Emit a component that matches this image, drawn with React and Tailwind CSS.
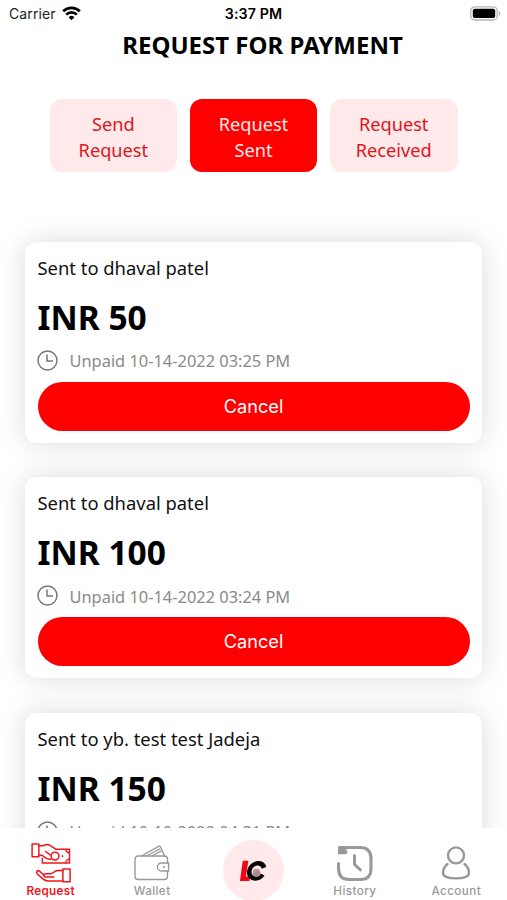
import React, { useState } from 'react'

const tabs = [
  { id: 'send', lines: ['Send', 'Request'] },
  { id: 'sent', lines: ['Request', 'Sent'] },
  { id: 'received', lines: ['Request', 'Received'] },
]

const requests = [
  { id: 1, name: 'dhaval patel', amount: 50, status: 'Unpaid', date: '10-14-2022 03:25 PM' },
  { id: 2, name: 'dhaval patel', amount: 100, status: 'Unpaid', date: '10-14-2022 03:24 PM' },
  { id: 3, name: 'yb. test test Jadeja', amount: 150, status: 'Unpaid', date: '10-10-2022 04:31 PM' },
]

function WifiIcon() {
  return (
    <svg width="19" height="15" viewBox="0 0 19 15" fill="none" stroke="#000" strokeWidth="2.7">
      <path d="M1.2 5.2a11.8 11.8 0 0 1 16.6 0" />
      <path d="M4.2 8.6a7.4 7.4 0 0 1 10.6 0" />
      <path d="M9.5 14.2 6.6 11.2a4.1 4.1 0 0 1 5.8 0z" fill="#000" stroke="none" />
    </svg>
  )
}

function BatteryIcon() {
  return (
    <svg width="31" height="15" viewBox="0 0 31 15" fill="none">
      <rect x="0.8" y="0.8" width="26.4" height="13.2" rx="4" stroke="#b4b4b4" strokeWidth="1.3" />
      <rect x="2.8" y="2.8" width="22.4" height="9.2" rx="2" fill="#000" />
      <path d="M28.700 5v4.800c1-.4 1.600-1.300 1.600-2.400S29.700 5.400 28.700 5z" fill="#b4b4b4" />
    </svg>
  )
}

function ClockIcon() {
  return (
    <svg width="21" height="21" viewBox="0 0 21 21" fill="none" stroke="#777" strokeWidth="1.5">
      <circle cx="10.500" cy="10.500" r="9.500" />
      <path d="M10 4.600v6.400h6" />
    </svg>
  )
}

function RequestIcon() {
  return (
    <svg width="40" height="40" viewBox="0.500 0.500 40 40" fill="none" stroke="#f5141c" strokeWidth="1.5" strokeLinejoin="round" strokeLinecap="round">
      {/* hand holding the note */}
      <path d="M1.600 1.500h6.800v12.800H1.600z" />
      <path d="M8.400 3.200h4.200l2.600-1c1.400-.5 2.700-.3 3.900.5l6.200 4" />
      <path d="M8.400 12.700h2.800l4.300 3c1.500 1 3.200 1.200 5 .8" />
      <path d="M15 9l4.800 3.300" />
      <path d="M25.300 6.700H39v13.800H11.800v-4.600" />
      <circle cx="24.500" cy="13.600" r="3.900" />
      <path d="M35.200 6.900c.2 2 1.500 3.300 3.600 3.500M38.800 16.700c-2 .2-3.400 1.500-3.600 3.600" strokeWidth="1.200" />
      <path d="M32 13.600h.1" strokeWidth="1.800" />
      {/* open hand */}
      <path d="M32.400 26.600h7.200v12.600h-7.200z" />
      <path d="M32.400 28h-5c-3.600 0-4.500 3.200-7.300 3.200h-4.800c-2.700 0-2.700 3.300 0 3.300h8" />
      <path d="M13.500 32.600l-4.300-3.900c-2-1.500-4.200.5-2.600 2.500l5.700 5.200c1.600 1.400 3.200 2 5.300 2h14.800" />
    </svg>
  )
}

function WalletIcon() {
  return (
    <svg width="36" height="36" viewBox="0 0 36 36" fill="none" stroke="#999" strokeWidth="1.400" strokeLinejoin="round" strokeLinecap="round">
      <path d="M33.500 18V14a3 3 0 0 0-3-3H4a3 3 0 0 0-3 3v17.500a3 3 0 0 0 3 3h26.500a3 3 0 0 0 3-3V26" />
      <path d="M34.600 18h-7.200a4 4 0 0 0 0 8h7.200z" />
      <path d="M30 22h.1" strokeWidth="2" />
      <path d="M7.500 11 24.500 1.400c.9-.5 1.600-.2 2 .6L30.500 11" />
      <path d="M12.500 11 25.500 4M18 11l8.800-4.800" />
    </svg>
  )
}

function LogoIcon() {
  return (
    <svg width="28" height="24" viewBox="0 0 28 24" fill="none">
      <path d="M3.800 1.800h5.600L6.900 17.500h4.300l-.8 4.500H.9z" fill="#f00713" />
      <g transform="translate(2.400 0) skewX(-10)">
        <path d="M24.200 8.800A7.400 7.600 0 1 0 24 15.400" stroke="#080808" strokeWidth="4.500" />
      </g>
      <circle cx="17.500" cy="13.800" r="4" fill="#b09a9a" />
      <path d="M15 15.800l4-4M16.500 17l4-4" stroke="#c6545a" strokeWidth="0.900" />
    </svg>
  )
}

function HistoryIcon() {
  return (
    <svg width="37" height="37" viewBox="0 0 37 37" fill="none" stroke="#999" strokeWidth="3" strokeLinecap="round" strokeLinejoin="round">
      <path d="M2.500 18.500v4.800C2.500 30.500 6 34.500 13 34.500h11.500C31.500 34.500 35 30.500 35 23.500v-10C35 6 31 2.500 24 2.500H4" />
      <path d="M2 1.500h8.500v4.300l1 1v1.400l-2.200 1H2z" fill="#999" stroke="none" />
      <path d="M18.500 10.500v9l6 5.500" />
    </svg>
  )
}

function AccountIcon() {
  return (
    <svg width="30" height="34" viewBox="0 0 30 34" fill="none" stroke="#999" strokeWidth="2.400" strokeLinecap="round">
      <circle cx="15" cy="9.400" r="8" />
      <path d="M6.500 18C4 20 2 24 2 27.200c0 3.300 5.800 5.200 13 5.200s13-1.900 13-5.200c0-3.200-2-7.200-4.500-9.200" />
    </svg>
  )
}

function StatusBar() {
  return (
    <div className="grid grid-cols-3 items-center h-[27px] pl-[9px] pr-[6px] font-['Inter',sans-serif] text-[14px] text-[#222]">
      <div className="flex items-center gap-[6px]">
        <span className="tracking-[0.1px]">Carrier</span>
        <WifiIcon />
      </div>
      <span className="-ml-[3px] text-center font-semibold text-[14.200px] tracking-[0.1px] text-black">3:37 PM</span>
      <div className="flex justify-end">
        <BatteryIcon />
      </div>
    </div>
  )
}

function RequestCard({ request }) {
  return (
    <div className="h-[201px] shrink-0 rounded-[12px] bg-white px-[12.500px] pt-[13px] shadow-[0_0_28px_rgba(0,0,0,0.15)]">
      <p className="text-[18.400px] leading-[26px] text-[#111]">Sent to {request.name}</p>
      <p className="mt-[13px] text-[33.500px] leading-[46px] font-bold text-black">INR {request.amount}</p>
      <div className="-ml-px mt-[8.500px] flex items-center gap-[12px] h-[24px]">
        <ClockIcon />
        <span className="pt-[3px] text-[16.400px] text-[#8a8a8a]">
          {request.status} {request.date}
        </span>
      </div>
      <button className="mt-[9.500px] w-full h-[49px] pt-[1px] rounded-full bg-[#ff0000] text-white font-['Inter',sans-serif] text-[18.200px]">
        Cancel
      </button>
    </div>
  )
}

function NavItem({ icon, label, active }) {
  return (
    <button className="w-[101.400px] flex flex-col items-center pt-[14.500px]">
      <span className="h-[41px] flex items-center justify-center">{icon}</span>
      <span
        className={`mt-[0.500px] text-[11.700px] leading-[15px] ${
          active ? 'font-semibold tracking-[0.3px] text-[#f5141c]' : 'font-medium tracking-[0.4px] text-[#999]'
        }`}
      >
        {label}
      </span>
    </button>
  )
}

function App() {
  const [activeTab, setActiveTab] = useState('sent')

  return (
    <div className="w-[507px] h-[900px] flex flex-col overflow-hidden bg-white font-['Noto_Sans',sans-serif]">
      <StatusBar />
      <h1 className="pl-[18px] text-center text-[24px] leading-[36px] font-bold text-black">REQUEST FOR PAYMENT</h1>

      {/* Tabs */}
      <div className="mt-[35.500px] px-[49.500px] flex gap-[12.500px] shrink-0">
        {tabs.map((tab) => (
          <button
            key={tab.id}
            onClick={() => setActiveTab(tab.id)}
            className={`flex-1 h-[73.500px] pt-[5px] rounded-[12px] flex flex-col items-center justify-center text-[18.200px] leading-[25.500px] ${
              activeTab === tab.id ? 'bg-[#ff0000] text-[#ffe9ea]' : 'bg-[#ffe9ea] text-[#e0141c]'
            }`}
          >
            {tab.lines.map((line) => (
              <span key={line}>{line}</span>
            ))}
          </button>
        ))}
      </div>

      {/* Requests */}
      <div className="flex-1 min-h-0 mt-[30px] pt-[39.500px] px-[25px] flex flex-col gap-[34.500px] overflow-hidden">
        {requests.map((request) => (
          <RequestCard key={request.id} request={request} />
        ))}
      </div>

      {/* Bottom navigation */}
      <nav className="h-[72px] shrink-0 flex bg-white font-['Inter',sans-serif]">
        <NavItem icon={<RequestIcon />} label="Request" active />
        <NavItem icon={<WalletIcon />} label="Wallet" />
        <div className="w-[101.400px] flex justify-center pt-[12px]">
          <div className="w-[61px] h-[61px] shrink-0 rounded-full bg-[#ffe9ea] flex items-center justify-center">
            <LogoIcon />
          </div>
        </div>
        <NavItem icon={<HistoryIcon />} label="History" />
        <NavItem icon={<AccountIcon />} label="Account" />
      </nav>
    </div>
  )
}

export default App
